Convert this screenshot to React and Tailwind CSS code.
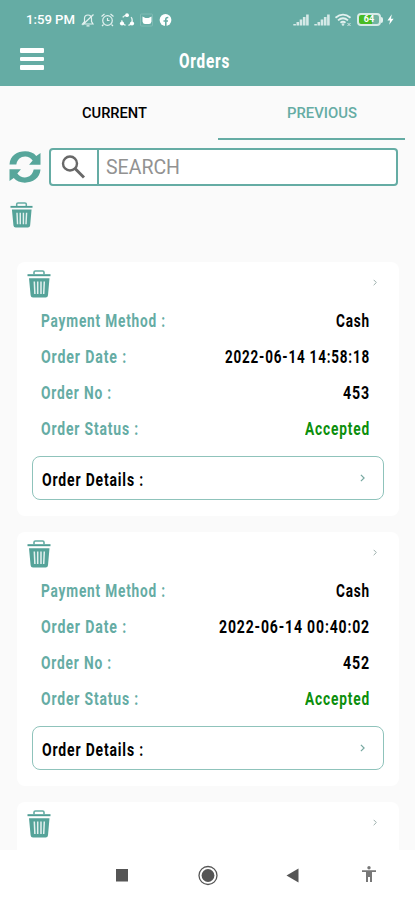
import { useLayoutEffect, useRef, useState } from "react";

// Condensed heading type: squeezes the text horizontally to a given width.
function Narrow({ children, width, className = "" }) {
  const ref = useRef(null);
  const [scale, setScale] = useState(1);
  useLayoutEffect(() => {
    setScale(width / ref.current.getBoundingClientRect().width);
  }, [width]);
  return (
    <span className={`block whitespace-nowrap ${className}`} style={{ width }}>
      <span className="block w-max origin-left" style={{ transform: `scaleX(${scale})` }}>
        <span ref={ref} className="inline-block">{children}</span>
      </span>
    </span>
  );
}

function Trash({ className }) {
  return (
    <svg viewBox="0 0 24 28" className={className} fill="none" preserveAspectRatio="none">
      <path d="M7 4.2V2.2Q7 1 8.4 1h7.2Q17 1 17 2.200V4.200" stroke="#65aca4" strokeWidth="1.6" />
      <path d="M.5 4.200h23v2H.5z" fill="#4f9e95" />
      <path d="M2 8.200h20.500l-1.500 17q-.2 2.300-2.400 2.300H6q-2.200 0-2.400-2.300z" fill="#55a399" />
      <path d="M7.300 11.500l.6 12.500M10.700 11.500v12.500M14 11.500v12.500M17.300 11.500l-.6 12.500" stroke="#e3f1ef" strokeWidth="1.500" />
    </svg>
  );
}

function Chevron({ className }) {
  return (
    <svg viewBox="0 0 6 10" className={className} fill="none" stroke="currentColor" strokeWidth="1.500">
      <path d="M1 1l4 4-4 4" />
    </svg>
  );
}

function StatusBar() {
  return (
    <div className="flex h-10 items-center justify-between pl-[26px] pr-[21px] text-white">
      <div className="flex items-center">
        <Narrow width={49} className="text-[13px] font-medium leading-5">1:59 PM</Narrow>
        <svg viewBox="0 0 92 16" className="ml-1.5 h-4 w-[92px]" fill="none" stroke="#e2f1ef" strokeWidth="1.200">
          <path d="M1.500 12h10.500L10.500 9.500V6.500a3.500 3.500 0 0 0-7 0V9.500zM5.500 13.800h3M1.500 13L12.500 2.500" />
          <circle cx="26.500" cy="8.500" r="4.800" />
          <path d="M26.500 6v2.500h2M20.500 4.500l3-2.500M32.500 4.500l-3-2.500M22.500 12.500L21 14M30.500 12.500L32 14" />
          <circle cx="46" cy="8.300" r="5.200" strokeWidth="1.400" strokeDasharray="6.500 3" />
          <circle cx="46" cy="3.200" r="1.900" fill="#fff" stroke="none" />
          <circle cx="41" cy="11.500" r="2.100" fill="#fff" stroke="none" />
          <circle cx="51" cy="11.500" r="2.100" fill="#fff" stroke="none" />
          <rect x="59.500" y="2" width="12" height="12" rx="1" stroke="#8bc1bb" strokeWidth=".7" />
          <path d="M61.500 4.500l3 1.500h3l3-1.500v5q-.5 2.500-2.500 2.500h-4q-2 0-2.500-2.500z" fill="#fff" stroke="none" />
          <circle cx="84.500" cy="8" r="5.900" fill="#fff" stroke="none" />
          <path d="M84.800 14V7.500q0-2.200 2.500-2M82.500 9h4.500" stroke="#65aca4" strokeWidth="1.600" />
        </svg>
      </div>
      <div className="flex items-center">
        <svg viewBox="0 0 62 16" className="h-4 w-[62px]" fill="#d5e9e7">
          {[0, 21].map((x) => (
            <g key={x}>
              <rect x={x + 0.3} y="12" width="2.600" height="1.500" />
              <rect x={x + 3.500} y="10" width="2.600" height="3.500" />
              <rect x={x + 6.700} y="7.500" width="2.600" height="6" />
              <rect x={x + 9.900} y="5" width="2.600" height="8.500" />
              <rect x={x + 13.100} y="2.500" width="2.600" height="11" />
            </g>
          ))}
          <g fill="none" stroke="#e2f1ef" strokeWidth="1.800">
            <path d="M42.500 5.700q7.500-6.200 15 0M45 8.400q5-4.200 10 0M47.500 10.800q2.500-2 5 0" />
          </g>
          <circle cx="50" cy="12.500" r="1.300" />
          <path d="M54.500 11l3 3m0-3l-3 3" stroke="#d5e9e7" />
        </svg>
        <div className="ml-[2px] flex items-center pb-px">
          <div className="flex h-[13px] w-6 items-center rounded-[4px] border-2 border-[#d8ebe8] bg-gradient-to-r from-[#48bb24] from-65% to-[#71b4a2] to-65%">
            <span className="w-full text-center font-['Roboto'] text-[9px] font-bold leading-none text-white">64</span>
          </div>
          <div className="h-1.5 w-0.5 rounded-r bg-[#e2f1ef]" />
        </div>
        <svg viewBox="0 0 8 12" className="mb-px ml-1 h-[11px] w-[7px]" fill="#fff">
          <path d="M5.500 0L.5 7h3L2.500 12l5-7h-3z" />
        </svg>
      </div>
    </div>
  );
}

function Header() {
  return (
    <header className="h-[86px] bg-[#65aca4]">
      <StatusBar />
      <div className="flex h-10 items-center pl-5">
        <div className="flex w-6 flex-col gap-1 pb-[2px]">
          <div className="h-[5px] rounded-[1px] bg-white" />
          <div className="h-[4px] rounded-[1px] bg-white" />
          <div className="h-[5px] rounded-[1px] bg-white" />
        </div>
        <Narrow width={51} className="ml-[135px] pt-[2px] text-[20px] font-extrabold leading-6 tracking-[0.05em] text-white">Orders</Narrow>
      </div>
    </header>
  );
}

function Tabs() {
  return (
    <nav className="flex h-[54px] px-[10px] text-[14px] font-medium leading-5">
      <div className="flex flex-1 justify-center pt-[17px] text-black">
        <Narrow width={65}>CURRENT</Narrow>
      </div>
      <div className="flex w-[187px] justify-center border-b-2 border-[#65aca4] pl-5 pt-[17px] text-[#65aca4]">
        <Narrow width={70}>PREVIOUS</Narrow>
      </div>
    </nav>
  );
}

function SearchRow() {
  return (
    <div className="flex items-start pl-[9px] pt-2">
      <svg viewBox="27 181 97 98" className="mt-[3px] h-8 w-8" fill="#57a69b">
        <path d="M28 222C30 195 52 182 76 182C90 182 102 187 110 196L123 187V223H88L99 210C93 202 85 198 76 198C62 198 52 207 49 222Z" />
        <path transform="rotate(180 75.500 230)" d="M28 222C30 195 52 182 76 182C90 182 102 187 110 196L123 187V223H88L99 210C93 202 85 198 76 198C62 198 52 207 49 222Z" />
      </svg>
      <div className="ml-2 flex h-[38px] w-[349px] rounded-[4px] border-2 border-[#65aca4] bg-white">
        <div className="flex w-12 items-center justify-center border-r-2 border-[#65aca4] pr-[2px]">
          <svg viewBox="0 0 24 24" className="h-6 w-6" fill="none" stroke="#686868" strokeWidth="2.400">
            <circle cx="9" cy="8.500" r="7" />
            <path d="M14 13.500l9 9" strokeWidth="3" />
          </svg>
        </div>
        <div className="flex items-center pl-[7px] text-[20px] text-[#929292]">
          <Narrow width={74}>SEARCH</Narrow>
        </div>
      </div>
    </div>
  );
}

function Row({ label, labelWidth, value, valueWidth, green }) {
  return (
    <div className="flex h-9 items-center justify-between pl-6 pr-[29px] text-[18.500px] font-bold leading-6 tracking-[0.06em]">
      <Narrow width={labelWidth} className="text-[#65aca4]">{label}</Narrow>
      <Narrow width={valueWidth} className={green ? "text-[#0c8f0c]" : "text-black"}>{value}</Narrow>
    </div>
  );
}

function CardTop() {
  return (
    <div className="flex justify-between pl-[10px] pr-[22px] pt-2">
      <Trash className="h-7 w-6" />
      <Chevron className="mt-[9px] h-[7px] w-1 text-[#9dafad]" />
    </div>
  );
}

function OrderCard({ date, dateWidth, number }) {
  return (
    <section className="h-[254px] shrink-0 rounded-lg bg-white">
      <CardTop />
      <div className="mt-[5px]">
        <Row label="Payment Method :" labelWidth={125} value="Cash" valueWidth={34} />
        <Row label="Order Date :" labelWidth={86} value={date} valueWidth={dateWidth} />
        <Row label="Order No :" labelWidth={71} value={number} valueWidth={27} />
        <Row label="Order Status :" labelWidth={98} value="Accepted" valueWidth={65} green />
      </div>
      <div className="ml-[15px] mt-[9px] flex h-11 w-[352px] items-center justify-between rounded-lg border-[1.500px] border-[#8fc3bb] pl-[9px] pr-[18px] text-[18.500px] font-bold leading-6 tracking-[0.06em] text-black">
        <Narrow width={102} className="pt-1">Order Details :</Narrow>
        <Chevron className="h-2 w-[5px] text-[#77a8a1]" />
      </div>
    </section>
  );
}

function NavBar() {
  return (
    <footer className="flex h-[50px] items-center bg-white pl-[115px]">
      <svg viewBox="0 0 264 24" className="h-6 w-[264px]" fill="#555">
        <rect x="1" y="6" width="12" height="12.500" />
        <circle cx="93" cy="12.500" r="9" fill="none" stroke="#555" strokeWidth="1.300" />
        <circle cx="93" cy="12.500" r="6.400" />
        <path d="M171.500 12.500L183.500 5.500v14z" />
        <g fill="#777">
          <circle cx="254" cy="4.700" r="1.700" />
          <path d="M247 7.200h14v1.800h-4V19h-2v-5h-2v5h-2V9h-4z" />
        </g>
      </svg>
    </footer>
  );
}

export default function App() {
  return (
    <div className="flex h-[900px] w-[415px] flex-col overflow-hidden bg-[#fafafa] font-['Roboto',sans-serif]">
      <Header />
      <Tabs />
      <SearchRow />
      <div className="h-[76px] shrink-0 pl-[10px] pt-[16px]">
        <Trash className="h-[26px] w-[23px]" />
      </div>
      <main className="flex h-[588px] flex-col gap-4 overflow-hidden pl-[17px] pr-4">
        <OrderCard date="2022-06-14 14:58:18" dateWidth={145} number="453" />
        <OrderCard date="2022-06-14 00:40:02" dateWidth={151} number="452" />
        <section className="h-12 shrink-0 rounded-t-lg bg-white">
          <CardTop />
        </section>
      </main>
      <NavBar />
    </div>
  );
}
